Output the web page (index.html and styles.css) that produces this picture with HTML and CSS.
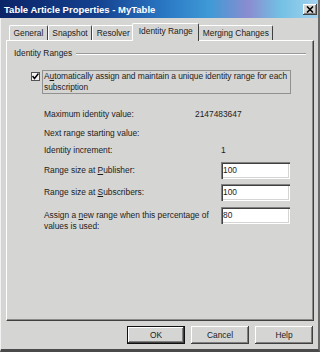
FILE: index.html
```html
<!DOCTYPE html>
<html lang="en">
<head>
    <meta charset="UTF-8">
    <meta name="viewport" content="width=device-width, initial-scale=1.0">
    <title>Table Article Properties - MyTable</title>
    <link rel="stylesheet" href="styles.css">
</head>
<body>
    <div class="window">
        <div class="titlebar">
            <span class="title">Table Article Properties - MyTable</span>
            <span class="close">
                <svg width="8" height="7" viewBox="0 0 8 7"><path d="M1 0.5 L7 6.5 M7 0.5 L1 6.5" stroke="#000" stroke-width="1.6"/></svg>
            </span>
        </div>

        <div class="tabs">
            <div class="tab">General</div>
            <div class="tab">Snapshot</div>
            <div class="tab">Resolver</div>
            <div class="tab active">Identity Range</div>
            <div class="tab">Merging Changes</div>
        </div>

        <div class="panel">
            <div class="group-head">
                <span>Identity Ranges</span>
                <div class="etched"></div>
            </div>

            <div class="check-row">
                <span class="checkbox">
                    <svg width="7" height="7" viewBox="0 0 7 7"><path d="M0.5 3 L2.5 5.5 L6.5 0.5" fill="none" stroke="#000" stroke-width="1.5"/></svg>
                </span>
                <span class="check-label">A<u>u</u>tomatically assign and maintain a unique identity range for each<br>subscription</span>
            </div>

            <div class="fields">
                <div class="cell label">Maximum identity value:</div>
                <div class="cell value wide">2147483647</div>

                <div class="cell label">Next range starting value:</div>
                <div class="cell value"></div>

                <div class="cell label">Identity increment:</div>
                <div class="cell value">1</div>

                <div class="cell label">Range size at <u>P</u>ublisher:</div>
                <div class="cell value"><input class="field" type="text" value="100"></div>

                <div class="cell label">Range size at <u>S</u>ubscribers:</div>
                <div class="cell value"><input class="field" type="text" value="100"></div>

                <div class="cell label long">Assign a <u>n</u>ew range when this percentage of<br>values is used:</div>
                <div class="cell value"><input class="field" type="text" value="80"></div>
            </div>
        </div>

        <div class="buttons">
            <button class="btn default">OK</button>
            <button class="btn">Cancel</button>
            <button class="btn">Help</button>
        </div>
    </div>
</body>
</html>
```

FILE: styles.css
```css
body {
    margin: 0;
    font-family: "Liberation Sans", Arial, sans-serif;
    font-size: 8.4px;
    color: #1c1c1c;
}
.window {
    width: 320px;
    height: 352px;
    box-sizing: border-box;
    background: #d5d5d3;
    border-left: 1px solid #f2f2f2;
    border-right: 2px solid #6a6a6a;
    border-bottom: 3px solid #4a4a4a;
    display: flex;
    flex-direction: column;
}
.titlebar {
    height: 18px;
    flex: none;
    margin-left: -1px;
    padding: 0 1px 0 4px;
    display: flex;
    align-items: center;
    justify-content: space-between;
    background: linear-gradient(90deg, #0b2468 0%, #14408e 30%, #2a78c4 52%, #3f9ad6 66%, #8a8cd0 78%, #72c0e4 88%, #a4d2ee 100%);
}
.title {
    color: #fff;
    font-weight: bold;
    font-size: 9.5px;
}
.close {
    width: 14px;
    height: 11px;
    box-sizing: border-box;
    background: #d5d5d3;
    display: flex;
    align-items: center;
    justify-content: center;
    box-shadow: inset -1px -1px #404040, inset 1px 1px #fff, inset -2px -2px #808080;
}
.tabs {
    height: 18px;
    flex: none;
    margin-top: 4px;
    padding-left: 8px;
    display: flex;
    align-items: flex-end;
}
.tab {
    height: 15px;
    box-sizing: border-box;
    padding: 0 3.5px;
    line-height: 14px;
    border-top: 1px solid #fff;
    border-left: 1px solid #fff;
    border-right: 1px solid #404040;
    border-radius: 2px 2px 0 0;
}
.tab.active {
    height: 18px;
    margin: 0 -1px -1px -2px;
    padding: 0 5.5px;
    line-height: 15px;
    background: #d5d5d3;
    position: relative;
    z-index: 1;
}
.panel {
    flex: 0 0 281px;
    box-sizing: border-box;
    margin: 0 4px 0 5px;
    border-top: 1px solid #fff;
    border-left: 1px solid #fff;
    border-right: 1px solid #404040;
    border-bottom: 1px solid #404040;
    box-shadow: inset -1px -1px #8a8a8a;
}
.group-head {
    display: flex;
    align-items: center;
    padding: 7px 7px 0 7px;
    line-height: 11px;
}
.etched {
    flex: 1;
    margin-left: 4px;
    height: 1px;
    background: #9a9a9a;
    border-bottom: 1px solid #fff;
}
.check-row {
    display: flex;
    align-items: flex-start;
    margin: 11px 0 0 24px;
}
.checkbox {
    width: 9px;
    height: 9px;
    box-sizing: border-box;
    margin: 2px 2px 0 0;
    background: #f4f4f4;
    border: 1px solid #555;
    display: flex;
    align-items: center;
    justify-content: center;
}
.check-label {
    width: 249px;
    box-sizing: border-box;
    padding: 0 1px;
    line-height: 11px;
    white-space: nowrap;
    letter-spacing: -0.05px;
    border: 1px solid #909090;
}
.fields {
    display: grid;
    grid-template-columns: 151px 26px 1fr;
    grid-template-rows: 19px 17px 20px 22px 23px 24px;
    margin: 12px 0 0 37px;
}
.cell {
    height: 17px;
    line-height: 17px;
    white-space: nowrap;
}
.label {
    grid-column: 1;
}
.value {
    grid-column: 3;
}
.value.wide {
    grid-column: 2 / 4;
}
.label.long {
    height: auto;
    padding-top: 3px;
    line-height: 11px;
}
.field {
    display: block;
    width: 69px;
    height: 17px;
    box-sizing: border-box;
    margin: 0;
    padding: 0 2px;
    font: inherit;
    color: #1c1c1c;
    background: #fff;
    border: none;
    box-shadow: inset 1px 1px #808080, inset 2px 2px #404040, inset -1px -1px #fff, inset -2px -2px #d5d5d3;
}
.buttons {
    display: flex;
    justify-content: flex-end;
    gap: 6px;
    margin-top: 5px;
    padding-right: 5px;
}
.btn {
    width: 58px;
    height: 18px;
    padding: 0;
    font: inherit;
    color: #1c1c1c;
    background: #d5d5d3;
    border: none;
    box-shadow: inset -1px -1px #404040, inset 1px 1px #fff, inset -2px -2px #808080;
}
.btn.default {
    border: 1px solid #111;
}
```
